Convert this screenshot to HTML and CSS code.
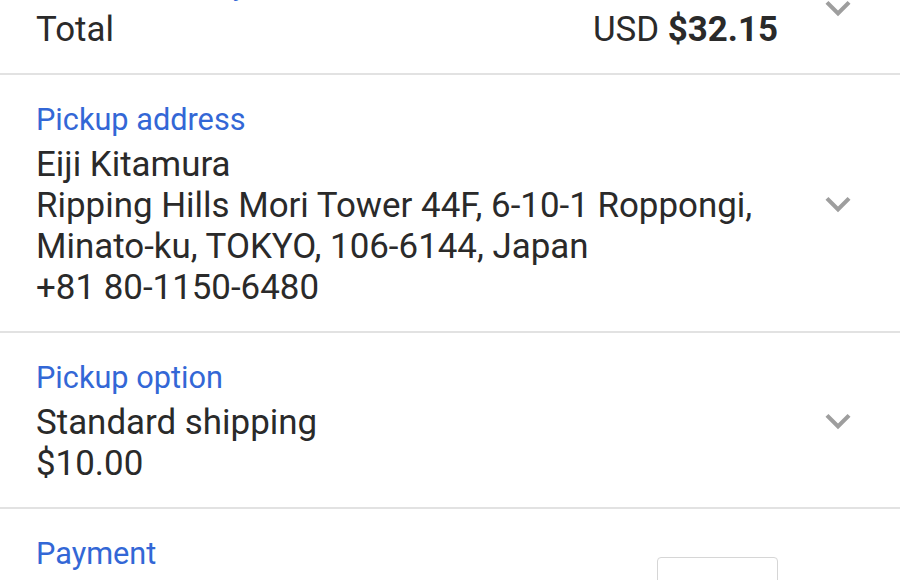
FILE: index.html
```html
<!DOCTYPE html>
<html>
<head>
<meta charset="utf-8">
<link rel="stylesheet" href="styles.css">
</head>
<body>
<div class="sheet">
  <section class="section summary">
    <div class="content">
      <div class="label">Order summary</div>
      <div class="total-line">
        <span class="total-name">Total</span>
        <span class="amount">USD <b>$32.15</b></span>
      </div>
    </div>
    <svg class="chev" viewBox="0 0 24 24"><path d="M16.59 8.59L12 13.17 7.41 8.59 6 10l6 6 6-6z"/></svg>
  </section>
  <section class="section">
    <div class="content">
      <div class="label">Pickup address</div>
      <div class="line">Eiji Kitamura</div>
      <div class="line">Ripping Hills Mori Tower 44F, 6-10-1 Roppongi,</div>
      <div class="line">Minato-ku, TOKYO, 106-6144, Japan</div>
      <div class="line">+81 80-1150-6480</div>
    </div>
    <svg class="chev" viewBox="0 0 24 24"><path d="M16.59 8.59L12 13.17 7.41 8.59 6 10l6 6 6-6z"/></svg>
  </section>
  <section class="section">
    <div class="content">
      <div class="label">Pickup option</div>
      <div class="line">Standard shipping</div>
      <div class="line">$10.00</div>
    </div>
    <svg class="chev" viewBox="0 0 24 24"><path d="M16.59 8.59L12 13.17 7.41 8.59 6 10l6 6 6-6z"/></svg>
  </section>
  <section class="section payment">
    <div class="content pay-row">
      <div class="label">Payment</div>
      <div class="card"></div>
    </div>
    <div class="chev-space"></div>
  </section>
</div>
</body>
</html>
```
FILE: styles.css
```css
html, body {
  margin: 0;
  padding: 0;
  background: #ffffff;
  overflow: hidden;
}
body {
  width: 900px;
  height: 580px;
  font-family: Roboto, "Noto Sans", sans-serif;
  color: #2a2a2a;
}
.sheet {
  margin-top: -60px;
}
.section {
  display: flex;
  align-items: center;
  padding: 25px 37px 23px 36px;
  border-bottom: 2px solid #e2e2e2;
}
.content {
  flex: 1;
  min-width: 0;
}
.label {
  font-size: 30.7px;
  line-height: 40px;
  color: #3367d6;
  margin-bottom: 4px;
  white-space: nowrap;
}
.line {
  font-size: 34.9px;
  line-height: 41px;
  white-space: nowrap;
}
.total-line {
  display: flex;
  justify-content: space-between;
  font-size: 34.9px;
  line-height: 41px;
}
.amount b {
  font-weight: 700;
}
.chev {
  width: 50px;
  height: 50px;
  flex: none;
  margin-left: 35px;
  fill: #9e9e9e;
}
.chev-space {
  width: 50px;
  flex: none;
  margin-left: 35px;
}
.payment {
  align-items: flex-start;
  border-bottom: none;
}
.pay-row {
  display: flex;
  justify-content: space-between;
  align-items: flex-start;
}
.card {
  width: 119px;
  height: 76px;
  margin-top: 23px;
  border: 1.5px solid #d6d6d6;
  border-radius: 4px;
}
```
